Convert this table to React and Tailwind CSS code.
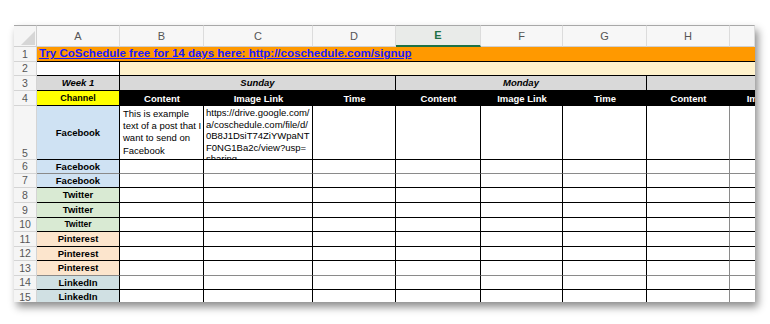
import React from 'react';

const channels = [
  { n: 6, name: 'Facebook', bg: 'bg-[#cfe2f3]', line: 'border-b-[#8a8a8a]' },
  { n: 7, name: 'Facebook', bg: 'bg-[#cfe2f3]', line: 'border-b-black' },
  { n: 8, name: 'Twitter', bg: 'bg-[#d9ead3]', line: 'border-b-black' },
  { n: 9, name: 'Twitter', bg: 'bg-[#d9ead3]', line: 'border-b-black' },
  { n: 10, name: 'Twitter', bg: 'bg-[#d9ead3]', line: 'border-b-black', small: true },
  { n: 11, name: 'Pinterest', bg: 'bg-[#fce5cd]', line: 'border-b-black' },
  { n: 12, name: 'Pinterest', bg: 'bg-[#fce5cd]', line: 'border-b-black' },
  { n: 13, name: 'Pinterest', bg: 'bg-[#fce5cd]', line: 'border-b-[#8a8a8a]' },
  { n: 14, name: 'LinkedIn', bg: 'bg-[#d0e0e3]', line: 'border-b-black' },
  { n: 15, name: 'LinkedIn', bg: 'bg-[#d0e0e3]', line: 'border-b-black' },
];

const letters = ['A', 'B', 'C', 'D', 'E', 'F', 'G', 'H', ''];
const labels = ['Content', 'Image Link', 'Time', 'Content', 'Image Link', 'Time', 'Content'];

const RowNum = ({ n, bottom }) => (
  <div
    className={`flex justify-center ${bottom ? 'items-end pb-[1px]' : 'items-center'} bg-[#f5f5f5] border-r border-b border-[#d4d4d4] text-[10.5px] text-[#555]`}
  >
    {n}
  </div>
);

const EmptyCells = ({ line }) => (
  <>
    {[0, 1, 2, 3, 4, 5].map(i => (
      <div key={i} className={`border-r border-b border-r-black ${line}`} />
    ))}
    <div className={`border-r border-b border-r-[#8a8a8a] ${line}`} />
    <div className={`border-b ${line}`} />
  </>
);

export default function App() {
  return (
    <div className="w-[770px] h-[324px] bg-white overflow-hidden pl-[14px] pt-[25px] font-['Liberation_Sans',Arial,sans-serif]">
      <div className="w-[741px] h-[277px] overflow-hidden bg-white shadow-[3px_5px_8px_rgba(0,0,0,0.45)]">
        <div className="grid grid-cols-[23px_83px_84px_109px_83px_85px_82px_84px_83px_25px] grid-rows-[22px_15px_14px_15px_15px_54px_14px_14px_15px_15px_14px_15px_14px_15px_14px_15px] leading-none">
          {/* column letters */}
          <div className="relative bg-[#f5f5f5] border-t border-t-[#a8a8a8] border-r border-b border-[#d0d0d0]">
            <svg className="absolute right-[1px] bottom-[1px]" width="14" height="14" viewBox="0 0 14 14">
              <polygon points="14,0 14,14 0,14" fill="#d6d6d6" />
            </svg>
          </div>
          {letters.map((l, i) =>
            l === 'E' ? (
              <div key={i} className="flex items-center justify-center bg-[#e9ebe9] border-t border-t-[#a8a8a8] border-r border-r-[#dcdcdc] border-b-2 border-b-[#1e7145] text-[11px] font-bold text-[#1e7145]">
                E
              </div>
            ) : (
              <div key={i} className="flex items-center justify-center bg-[#f7f7f7] border-t border-t-[#a8a8a8] border-r border-r-[#dcdcdc] border-b border-b-[#d0d0d0] text-[11px] text-[#555]">
                {l}
              </div>
            )
          )}

          {/* row 1 */}
          <RowNum n={1} />
          <div className="col-span-9 flex items-center pl-[2px] bg-[#ff9900] border-b border-black whitespace-nowrap">
            <span className="text-[11.5px] font-bold text-[#1a1aff] underline">
              Try CoSchedule free for 14 days here: http://coschedule.com/signup
            </span>
          </div>

          {/* row 2 */}
          <RowNum n={2} />
          <div className="bg-white border-r border-b border-black" />
          <div className="col-span-8 bg-[#fff2cc] border-b border-black" />

          {/* row 3 */}
          <RowNum n={3} />
          <div className="flex items-center justify-center bg-[#d9d9d9] border-r border-b border-black text-[9.5px] font-bold italic">
            Week 1
          </div>
          <div className="col-span-3 flex items-center justify-center bg-[#d9d9d9] border-r border-b border-black text-[9.5px] font-bold italic">
            Sunday
          </div>
          <div className="col-span-3 flex items-center justify-center bg-[#d9d9d9] border-r border-b border-black text-[9.5px] font-bold italic">
            Monday
          </div>
          <div className="col-span-2 bg-[#d9d9d9] border-b border-black" />

          {/* row 4 */}
          <RowNum n={4} />
          <div className="flex items-center justify-center bg-[#ffff00] border-r border-b border-black text-[9px] font-bold">
            Channel
          </div>
          {labels.map((t, i) => (
            <div key={i} className="flex items-center justify-center bg-black text-white text-[9.5px] font-bold">
              {t}
            </div>
          ))}
          <div className="bg-black overflow-hidden flex items-center">
            <div className="w-[83px] shrink-0 text-center text-white text-[9.5px] font-bold whitespace-nowrap">Image Link</div>
          </div>

          {/* row 5 */}
          <RowNum n={5} bottom />
          <div className="flex items-center justify-center bg-[#cfe2f3] border-r border-b border-black text-[9.5px] font-bold">
            Facebook
          </div>
          <div className="flex items-end pl-[3px] pb-[2px] border-r border-b border-black text-[9.5px] leading-[12.3px]">
            This is example text of a post that I want to send on Facebook
          </div>
          <div className="overflow-hidden pl-[2px] pt-[1px] border-r border-b border-black text-[9.5px] leading-[11.6px] whitespace-nowrap">
            <div>https://drive.google.com/</div>
            <div>a/coschedule.com/file/d/</div>
            <div>0B8J1DsiT74ZiYWpaNT</div>
            <div>F0NG1Ba2c/view?usp=</div>
            <div>sharing</div>
          </div>
          {[0, 1, 2, 3].map(i => (
            <div key={i} className="border-r border-b border-black" />
          ))}
          <div className="border-r border-r-[#8a8a8a] border-b border-b-black" />
          <div className="border-b border-black" />

          {/* rows 6-15 */}
          {channels.map(c => (
            <React.Fragment key={c.n}>
              <RowNum n={c.n} />
              <div className={`flex items-center justify-center ${c.bg} border-r border-b border-r-black ${c.line} ${c.small ? 'text-[8.5px]' : 'text-[9.5px]'} font-bold`}>
                {c.name}
              </div>
              <EmptyCells line={c.line} />
            </React.Fragment>
          ))}
        </div>
      </div>
    </div>
  );
}
